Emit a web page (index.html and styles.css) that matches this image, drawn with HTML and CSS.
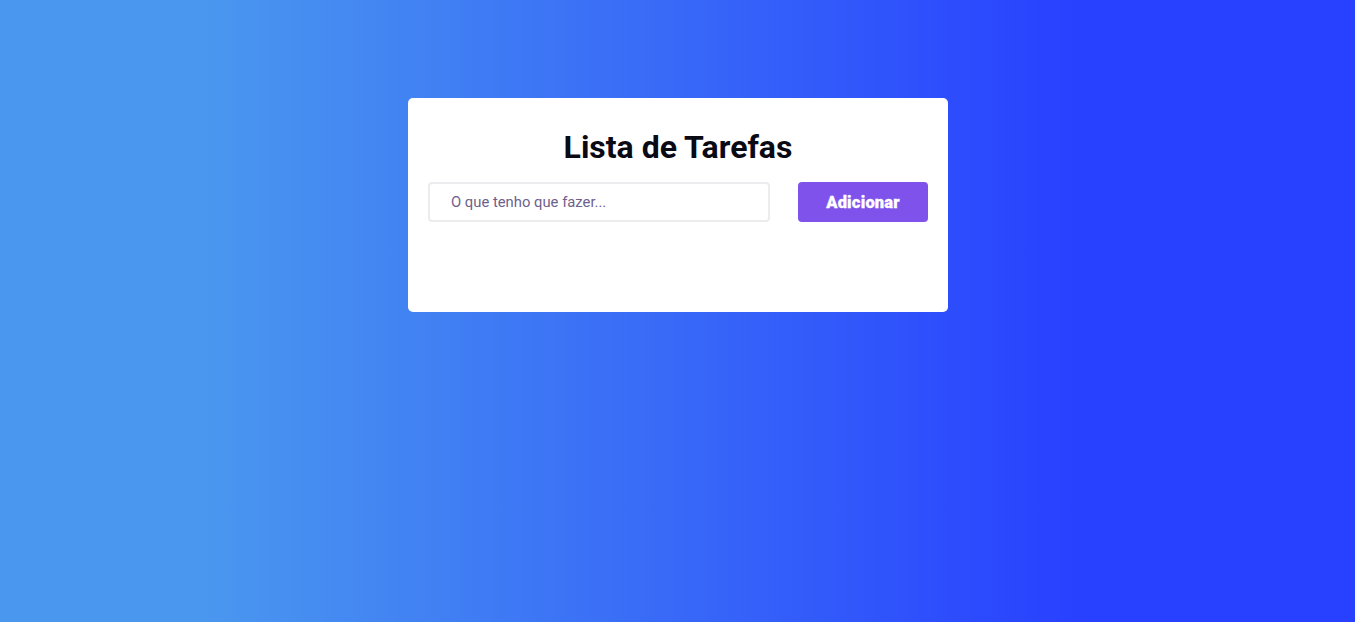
FILE: index.html
```html
<!DOCTYPE html>
<html lang="pt-BR">
<head>
<meta charset="utf-8">
<title>Lista de Tarefas</title>
<link rel="stylesheet" href="styles.css">
</head>
<body>
<main class="page">
  <section class="card">
    <h1 class="title">Lista de Tarefas</h1>
    <form class="todo-form">
      <input class="todo-input" type="text" placeholder="O que tenho que fazer...">
      <button class="todo-button" type="button">Adicionar</button>
    </form>
    <ul class="todo-list"></ul>
  </section>
</main>
</body>
</html>
```
FILE: styles.css
```css
* { box-sizing: border-box; }
html, body { margin: 0; height: 100%; }
body {
  font-family: Roboto, "Liberation Sans", sans-serif;
  background: linear-gradient(to right, #4a97ef 15%, #2840ff 80%);
}
.page {
  display: flex;
  justify-content: center;
  padding-top: 98px;
  padding-left: 1px;
}
.card {
  width: 540px;
  height: 214px;
  background: #fff;
  border-radius: 5px;
  padding: 20px;
}
.title {
  margin: 10px 0 16px;
  text-align: center;
  font-size: 32px;
  line-height: 38px;
  font-weight: 700;
  color: #0a0a14;
}
.todo-form {
  display: flex;
  gap: 28px;
}
.todo-input {
  flex: 1;
  height: 40px;
  border: 2px solid #ececef;
  border-radius: 4px;
  padding: 0 21px;
  font-family: inherit;
  font-size: 14.8px;
  color: #333;
  outline: none;
}
.todo-input::placeholder { color: #6e5f8c; }
.todo-button {
  width: 130px;
  height: 40px;
  border: none;
  border-radius: 4px;
  background: #8052ec;
  color: #fff;
  font-family: inherit;
  font-size: 16.5px;
  font-weight: 900;
  letter-spacing: 0.2px;
  -webkit-text-stroke: 0.3px #fff;
}
.todo-list { margin: 0; padding: 0; list-style: none; }
```
